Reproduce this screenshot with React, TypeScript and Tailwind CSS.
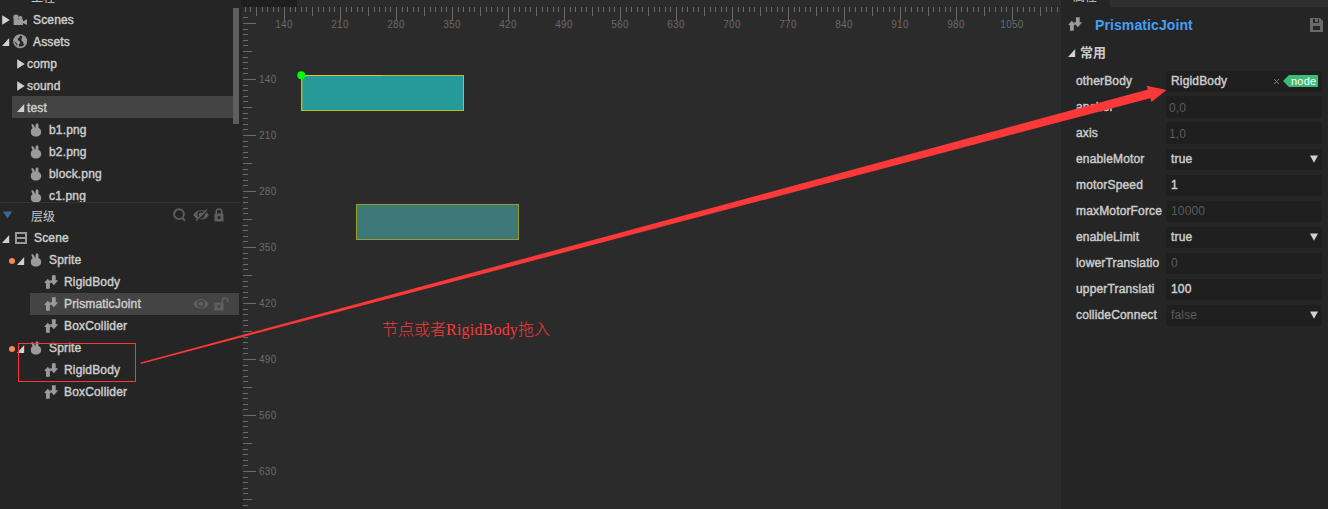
import React from "react";

const SANS = "font-['Liberation_Sans','Noto_Sans_CJK_SC',sans-serif]";

function Rabbit() {
  return (
    <svg width="12" height="14" viewBox="0 0 12 14" fill="#9b9b9b" className="shrink-0">
      <path d="M1.6 1.2C2.4 0.6 4.2 2 4.8 4.4H5.6C5.2 2.2 5.8 0.4 7 0.2C8.6 0.2 8.9 2.6 8.3 4.7C10.2 5.5 11.2 7.1 11.2 9C11.2 11.8 8.9 13.6 6 13.6C3 13.6 0.8 11.8 0.8 9C0.8 7.3 1.5 5.9 2.8 5.1C1.8 3.8 1.2 2.2 1.6 1.2Z" />
    </svg>
  );
}

function Arrows() {
  return (
    <svg width="14" height="14" viewBox="0 0 14 14" fill="#9b9b9b" className="shrink-0">
      <path d="M3.8 3.7L7.2 7.6V8H5.8V13.8H2V8H0.4V7.6ZM7.9 0.2H11.7V5.2H13.8V5.8L9.8 10.2L5.9 5.8V5.2H7.9Z" />
    </svg>
  );
}

function Caret({ open }: { open?: boolean }) {
  return (
    <svg width="8" height="10" viewBox="0 0 8 10" fill="#d0d0d0" className="shrink-0">
      {open ? <path d="M7.2 1V9H0Z" /> : <path d="M0.2 0.3L7.8 5L0.2 9.7Z" />}
    </svg>
  );
}

function Camera() {
  return (
    <svg width="15" height="12" viewBox="0 0 15 12" fill="#9b9b9b" className="shrink-0">
      <circle cx="3" cy="3.2" r="2.7" />
      <circle cx="7.4" cy="4" r="2" />
      <path d="M0.6 5.2H10V7.2L14 5.2V11L10 9V11H0.6Z" />
    </svg>
  );
}

function Globe() {
  return (
    <svg width="15" height="15" viewBox="0 0 15 15" className="shrink-0">
      <circle cx="7.2" cy="7.2" r="6.2" fill="none" stroke="#9b9b9b" strokeWidth="1.6" />
      <path d="M1.4 4.5L4.6 1.2L7.2 1.6L6.2 3.6L4.8 4.8L5 6.2L6.8 7.4L7.4 9L6 10.2L5.8 13L4.4 12.4L4 9.4L1.6 7.4Z" fill="#9b9b9b" />
      <path d="M9.4 2.2L12.6 4.4L13.4 7.4L11.8 11L10.2 9.8L10.4 8L8.6 7L8.4 4.8Z" fill="#9b9b9b" />
    </svg>
  );
}

function SceneIcon() {
  return (
    <svg width="12" height="12" viewBox="0 0 12 12" className="shrink-0">
      <path d="M1 1H11V11H1ZM1 6H11" fill="none" stroke="#9b9b9b" strokeWidth="2" />
    </svg>
  );
}

function Eye({ off }: { off?: boolean }) {
  return (
    <svg width="16" height="12" viewBox="0 0 16 12" className="shrink-0">
      <path d="M0.2 6C3.6 -0.4 12.4 -0.4 15.8 6C12.4 12 3.6 12 0.2 6Z" fill="#5e5e5e" />
      <circle cx="8" cy="5.8" r="3" fill="none" stroke={off ? "#252525" : "#444444"} strokeWidth="1.4" />
      {off && <path d="M4.2 11.9L14.9 1.2" stroke="#252525" strokeWidth="1.3" />}
      {off && <path d="M3 11.4L13.9 0.5" stroke="#5e5e5e" strokeWidth="1.4" />}
    </svg>
  );
}

function Lock() {
  return (
    <svg width="10" height="14" viewBox="0 0 10 14" className="shrink-0">
      <path d="M2.3 6V3.4C2.3 0.2 7.7 0.2 7.7 3.4V6" fill="none" stroke="#5e5e5e" strokeWidth="1.7" />
      <path d="M0.5 5.5H9.5V13.5H0.5Z" fill="#5e5e5e" />
      <circle cx="5" cy="9.4" r="1.5" fill="#252525" />
    </svg>
  );
}

function Unlock() {
  return (
    <svg width="15" height="14" viewBox="0 0 15 14" className="shrink-0">
      <path d="M8.4 6V3.6C8.4 0.2 13.7 0.2 13.7 3.6V5" fill="none" stroke="#5e5e5e" strokeWidth="1.6" />
      <path d="M0.3 5.5H9.5V13.5H0.3Z" fill="#5e5e5e" />
      <circle cx="4.9" cy="9.4" r="1.8" fill="#444444" />
    </svg>
  );
}

function Save() {
  return (
    <svg width="13" height="14" viewBox="0 0 13 14" className="shrink-0">
      <path d="M0 0H10L13 3V14H0Z" fill="#696969" />
      <path d="M3 1H9V5H3ZM3 8H10V12H3Z" fill="#252525" />
      <path d="M5 1H8V4H5Z" fill="#696969" />
    </svg>
  );
}

function AssetFolder({ name, open }: { name: string; open?: boolean }) {
  return (
    <div className={open ? "ml-3 flex h-[22px] items-center bg-[#444444] pt-px pl-[5px]" : "ml-3 flex h-[22px] items-center pt-px pl-[5px]"}>
      <Caret open={open} />
      <span className="mt-px ml-[2px]">{name}</span>
    </div>
  );
}

function AssetFile({ name }: { name: string }) {
  return (
    <div className="flex h-[22px] items-center pt-[2px] pl-[30px]">
      <Rabbit />
      <span className="ml-[7px]">{name}</span>
    </div>
  );
}

function SpriteRow() {
  return (
    <div className="flex h-[22px] items-center pl-[9px]">
      <span className="mt-[2px] h-[6px] w-[6px] rounded-full bg-[#ff8447]" />
      <span className="mt-[2px] ml-[2px] flex"><Caret open /></span>
      <span className="ml-[5px] flex"><Rabbit /></span>
      <span className="ml-[7px]">Sprite</span>
    </div>
  );
}

function ComponentRow({ name, selected }: { name: string; selected?: boolean }) {
  return (
    <div className={selected ? "ml-[30px] mr-[2px] flex h-[22px] items-center bg-[#444444] pl-[14px]" : "ml-[30px] mr-[2px] flex h-[22px] items-center pl-[14px]"}>
      <Arrows />
      <span className="ml-[6px] grow">{name}</span>
      {selected && (
        <div className="flex items-center gap-[5px] pr-[10px]">
          <Eye />
          <Unlock />
        </div>
      )}
    </div>
  );
}

function Sidebar() {
  return (
    <aside className="flex w-[241px] shrink-0 flex-col bg-[#252525]">
      <div className="h-[203px] overflow-hidden border-b border-[#333333]">
        <div className="flex h-2 items-end overflow-hidden pl-[31px] text-[12px] leading-[18px] [-webkit-text-stroke:0px]">
          <span className="mb-[1px] tracking-normal">工程</span>
        </div>
        <div className="flex">
          <div className="w-[233px]">
            <div className="flex h-[22px] items-center pt-px pl-[2px]">
              <Caret />
              <span className="ml-[3px] flex"><Camera /></span>
              <span className="ml-[5px]">Scenes</span>
            </div>
            <div className="flex h-[22px] items-center pt-px pl-[2px]">
              <Caret open />
              <span className="ml-[3px] flex"><Globe /></span>
              <span className="ml-[5px]">Assets</span>
            </div>
            <AssetFolder name="comp" />
            <AssetFolder name="sound" />
            <AssetFolder name="test" open />
            <AssetFile name="b1.png" />
            <AssetFile name="b2.png" />
            <AssetFile name="block.png" />
            <div className="h-[19px] overflow-hidden">
              <AssetFile name="c1.png" />
            </div>
          </div>
          <div className="h-[116px] w-[6px] bg-[#5e5e5e]" />
        </div>
      </div>
      <div className="flex h-6 items-center pl-[3px]">
        <svg width="9" height="8" viewBox="0 0 9 8" className="mb-px"><path d="M0 0.5H9L4.5 7.5Z" fill="#356a9b" /></svg>
        <span className="mt-[3px] ml-[19px] grow tracking-normal [-webkit-text-stroke:0px]">层级</span>
        <svg width="14" height="14" viewBox="0 0 14 14" fill="none" stroke="#5e5e5e" strokeWidth="1.9">
          <circle cx="6" cy="6.2" r="4.9" />
          <path d="M9 9.5L12 12.8" />
        </svg>
        <span className="ml-[6px] flex"><Eye off /></span>
        <span className="mr-[17px] ml-[5px] flex"><Lock /></span>
      </div>
      <div className="flex h-[22px] items-center pl-[2px]">
        <span className="mt-[2px] flex"><Caret open /></span>
        <span className="ml-[5px] flex"><SceneIcon /></span>
        <span className="ml-[7px]">Scene</span>
      </div>
      <SpriteRow />
      <ComponentRow name="RigidBody" />
      <ComponentRow name="PrismaticJoint" selected />
      <ComponentRow name="BoxCollider" />
      <SpriteRow />
      <ComponentRow name="RigidBody" />
      <ComponentRow name="BoxCollider" />
    </aside>
  );
}

const H_TICKS = Array.from({ length: 146 }, (_, i) => i - 7);
const V_TICKS = Array.from({ length: 88 }, (_, i) => i - 11);

function tickLength(i: number) {
  if (i % 10 === 0) return 13;
  return i % 5 === 0 ? 9 : 5;
}

function Canvas() {
  return (
    <main className="w-[820px] shrink-0 bg-[#2b2b2b] [-webkit-text-stroke:0px]">
      <svg width="820" height="509" viewBox="241 0 820 509" className="block font-['Liberation_Sans',sans-serif] text-[10px]">
        <path d="M241 0H297V7H241Z" fill="#1e1e1e" />
        <path d="M241 7H242V509H241Z" fill="#252525" />
        <g fill="#6a6a6a">
          {H_TICKS.filter((i) => 284 + i * 5.6 < 1058).map((i) => (
            <rect key={i} x={Math.round(283.9 + i * 5.6)} y="7" width="1" height={tickLength(i)} />
          ))}
          {V_TICKS.filter((i) => 79 + i * 5.6 < 506).map((i) => (
            <rect key={i} x="243" y={Math.round(78.9 + i * 5.6)} width={tickLength(i)} height="1" />
          ))}
          {Array.from({ length: 14 }, (_, i) => (
            <text key={i} x={284 + i * 56} y="28" textAnchor="middle" letterSpacing="0.3">{140 + i * 70}</text>
          ))}
          {Array.from({ length: 8 }, (_, i) => (
            <text key={i} x="259" y={83 + i * 56} letterSpacing="0.3">{140 + i * 70}</text>
          ))}
        </g>
        <rect x="301.5" y="75.5" width="162" height="35" fill="#269999" stroke="#b4c31f" />
        <path d="M302 75.5H382" stroke="#e0c31f" />
        <path d="M302.5 76V110" stroke="#5fa658" />
        <circle cx="301.3" cy="75.2" r="4" fill="#00ff00" />
        <rect x="356.5" y="204.5" width="162" height="35" fill="#3d7777" stroke="#93a02e" />
      </svg>
    </main>
  );
}

type Field = { label: string; value: string; kind?: "select" | "node" | "pair"; dim?: boolean };

const FIELDS: Field[] = [
  { label: "otherBody", value: "RigidBody", kind: "node" },
  { label: "anchor", value: "0,0", kind: "pair", dim: true },
  { label: "axis", value: "1,0", kind: "pair", dim: true },
  { label: "enableMotor", value: "true", kind: "select" },
  { label: "motorSpeed", value: "1" },
  { label: "maxMotorForce", value: "10000", dim: true },
  { label: "enableLimit", value: "true", kind: "select" },
  { label: "lowerTranslatio", value: "0", dim: true },
  { label: "upperTranslati", value: "100" },
  { label: "collideConnect", value: "false", kind: "select", dim: true },
];

function FieldRow({ field }: { field: Field }) {
  return (
    <div className="flex h-[26px] items-center pr-[6px] pl-[15px]">
      <span className="w-[90px] shrink-0 whitespace-nowrap">{field.label}</span>
      <div className={field.kind === "pair" ? "flex h-[22px] grow items-center bg-[#1f1f1f] pt-px pr-1 pl-[3px]" : "flex h-[21px] grow items-center bg-[#1f1f1f] pr-1 pl-[5px]"}>
        <span className={field.dim ? "grow text-[#5c5c5c] [-webkit-text-stroke:0px]" : "grow"}>{field.value}</span>
        {field.kind === "select" && (
          <svg width="8" height="8" viewBox="0 0 8 8" className="mb-px"><path d="M0 0.5H8L4 7.8Z" fill="#d0d0d0" /></svg>
        )}
        {field.kind === "node" && (
          <>
            <svg width="7" height="7" viewBox="0 0 7 7" className="mr-[3px]"><path d="M1 1L6 6M6 1L1 6" stroke="#6f8088" /></svg>
            <svg width="6" height="12" viewBox="0 0 6 12"><path d="M6 0V12L0 6Z" fill="#3dbb75" /></svg>
            <span className="h-3 w-[29px] bg-[#3dbb75] pl-[2px] text-[11px] leading-3 tracking-[0.2px] text-white [-webkit-text-stroke:0px]">node</span>
          </>
        )}
      </div>
    </div>
  );
}

function Inspector() {
  return (
    <aside className="w-[267px] shrink-0 bg-[#252525]">
      <div className="flex h-[7px] overflow-hidden">
        <div className="flex w-[49px] items-end pl-3 text-[12px] leading-[18px] tracking-normal [-webkit-text-stroke:0px]"><span className="mb-px">属性</span></div>
        <div className="grow bg-[#2f2f2f]" />
      </div>
      <div className="flex h-9 items-center pr-[5px] pl-[7px]">
        <span className="mb-[2px] flex"><Arrows /></span>
        <span className="ml-[13px] grow text-[14px] font-bold tracking-[0.1px] text-[#459ef5] [-webkit-text-stroke:0px]">PrismaticJoint</span>
        <Save />
      </div>
      <div className="flex h-[25px] items-start pl-[7px]">
        <span className="mt-[5px] flex"><Caret open /></span>
        <span className="ml-1 text-[13px] leading-5 font-bold tracking-normal [-webkit-text-stroke:0px]">常用</span>
      </div>
      {FIELDS.map((f) => (
        <FieldRow key={f.label} field={f} />
      ))}
    </aside>
  );
}

function Annotations() {
  return (
    <>
      <div className="absolute top-[343px] left-[18px] h-[39px] w-[118px] border border-[#fb3737]" />
      <svg width="1328" height="509" className="absolute top-0 left-0">
        <path d="M140.5 362.6L1148 89.6L1146.5 85.8L1166.5 90L1151.5 102L1150.2 98.2L140.5 364Z" fill="#fc3838" />
      </svg>
      <div className="absolute top-[316px] left-[382px] font-['Noto_Sans_CJK_SC',sans-serif] text-[16px] leading-6 tracking-normal font-light whitespace-nowrap text-[#fb3737] [-webkit-text-stroke:0px]">
        节点或者<span className="font-['Liberation_Serif',serif] tracking-[0.2px]">RigidBody</span>拖入
      </div>
    </>
  );
}

export default function App() {
  return (
    <div className={`relative flex h-[509px] w-[1328px] overflow-hidden bg-[#252525] text-[12px] tracking-[0.16px] text-[#cbcbcb] [-webkit-text-stroke:0.45px] ${SANS}`}>
      <Sidebar />
      <Canvas />
      <Inspector />
      <Annotations />
    </div>
  );
}
